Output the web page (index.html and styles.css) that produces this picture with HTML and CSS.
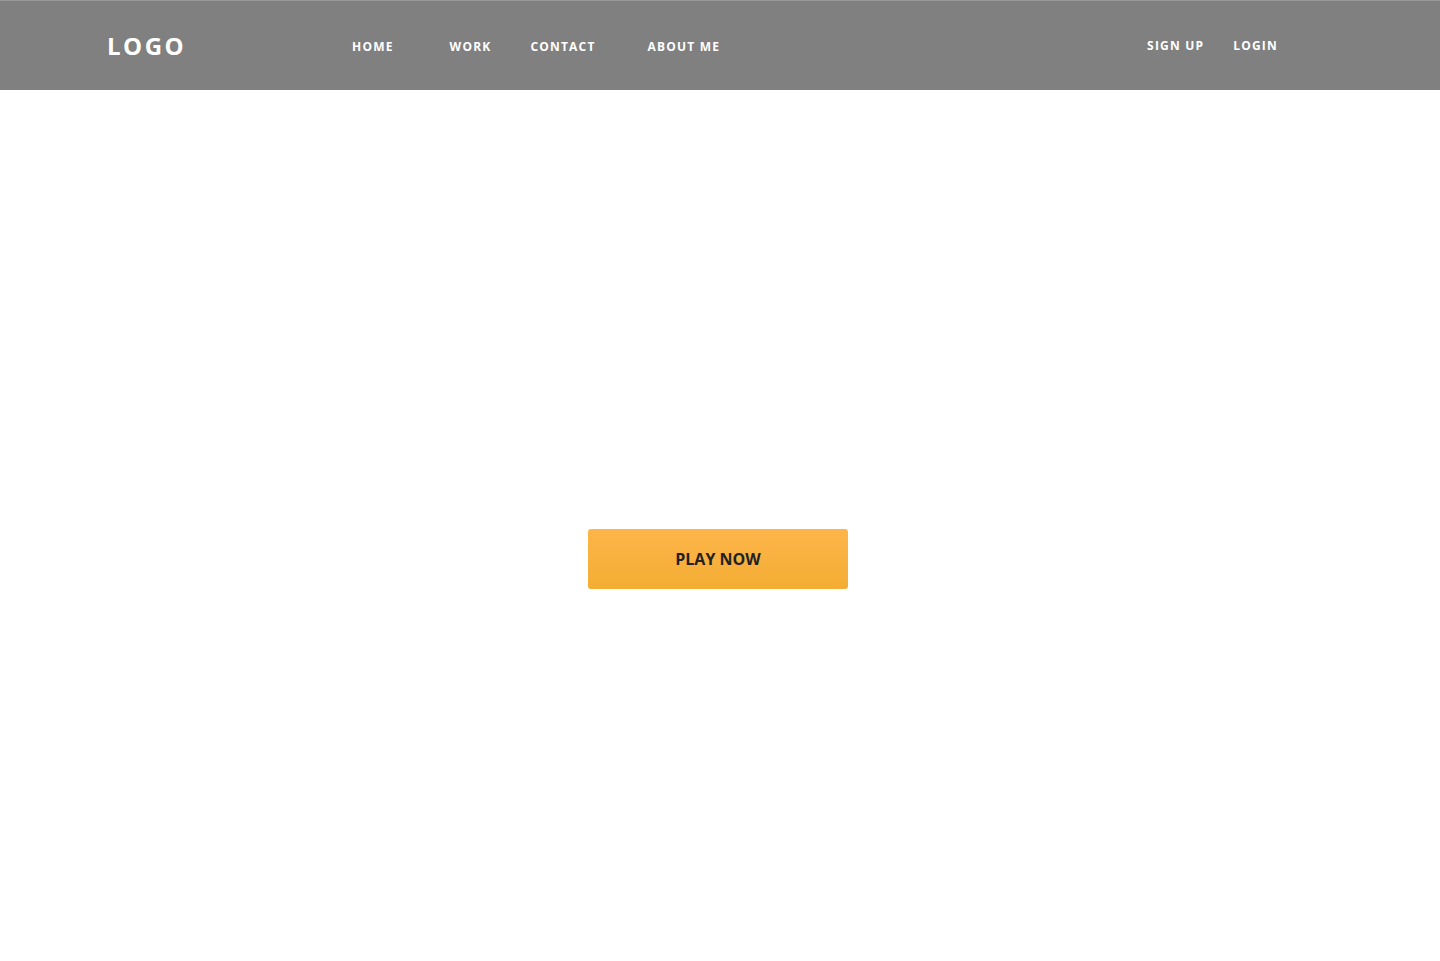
FILE: index.html
```html
<!DOCTYPE html>
<html>
<head>
<meta charset="utf-8">
<link rel="stylesheet" href="styles.css">
</head>
<body>
<header class="topbar">
  <div class="logo">LOGO</div>
  <nav class="nav">
    <a class="nav-item home">HOME</a>
    <a class="nav-item work">WORK</a>
    <a class="nav-item contact">CONTACT</a>
    <a class="nav-item about">ABOUT ME</a>
  </nav>
  <div class="auth">
    <a class="auth-item">SIGN UP</a>
    <a class="auth-item login">LOGIN</a>
  </div>
</header>
<main class="hero">
  <button class="play">PLAY NOW</button>
</main>
</body>
</html>
```
FILE: styles.css
```css
html, body {
  margin: 0;
  padding: 0;
  background: #ffffff;
  font-family: "Open Sans", "Liberation Sans", sans-serif;
}
.topbar {
  height: 89px;
  background: #808080;
  border-top: 1px solid #9a9a9a;
  display: flex;
  align-items: center;
  padding-left: 107px;
  box-sizing: content-box;
}
.logo {
  color: #ffffff;
  font-weight: 700;
  font-size: 24px;
  letter-spacing: 2.5px;
  width: 245px;
  margin-top: 0;
}
.nav {
  display: flex;
  align-items: center;
  margin-top: 2px;
}
.nav-item {
  color: #ffffff;
  font-weight: 700;
  font-size: 12px;
  letter-spacing: 1.2px;
}
.work { margin-left: 56px; }
.contact { margin-left: 39px; }
.about { margin-left: 52px; }
.auth {
  display: flex;
  margin-left: auto;
  margin-right: 162px;
}
.auth-item {
  color: #ffffff;
  font-weight: 700;
  font-size: 12px;
  letter-spacing: 1.2px;
}
.login { margin-left: 29px; }
.hero {
  display: flex;
  justify-content: center;
  padding-top: 439px;
  padding-right: 4px;
}
.play {
  width: 260px;
  height: 60px;
  border: none;
  border-radius: 3px;
  background: linear-gradient(#fdb54a, #f4ad33);
  color: #222222;
  font-family: "Open Sans", "Liberation Sans", sans-serif;
  font-weight: 700;
  font-size: 16px;
  padding: 0;
}
```
